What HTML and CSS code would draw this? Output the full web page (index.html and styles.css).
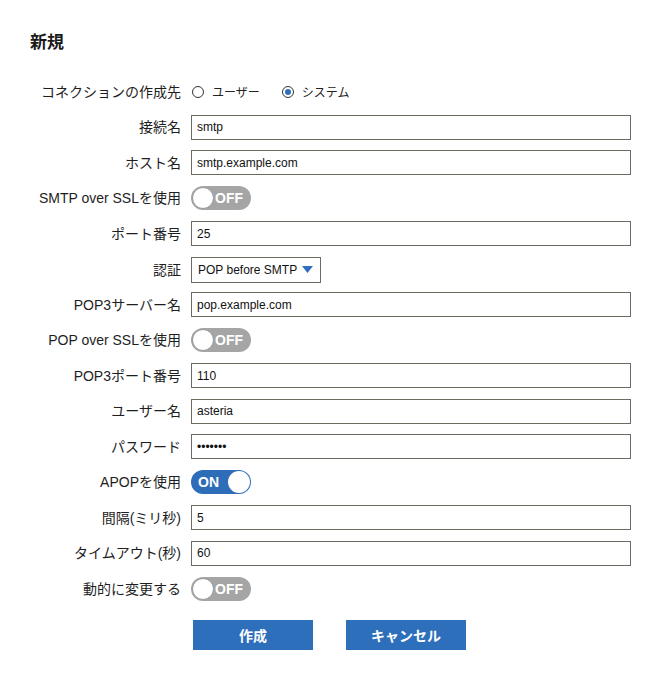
FILE: index.html
```html
<!DOCTYPE html>
<html lang="ja">
<head>
<meta charset="utf-8">
<title>新規</title>
<link rel="stylesheet" href="styles.css">
</head>
<body>
<div class="page">
  <h1 class="title">新規</h1>
  <div class="form">
    <div class="row">
      <span class="label">コネクションの作成先</span>
      <div class="radios">
        <span class="radio"><span class="radio-dot"></span>ユーザー</span>
        <span class="radio"><span class="radio-dot is-checked"></span>システム</span>
      </div>
    </div>
    <div class="row">
      <span class="label">接続名</span>
      <input class="input" type="text" value="smtp">
    </div>
    <div class="row">
      <span class="label">ホスト名</span>
      <input class="input" type="text" value="smtp.example.com">
    </div>
    <div class="row">
      <span class="label">SMTP over SSLを使用</span>
      <div><span class="toggle is-off"><span class="knob"></span><span class="toggle-text">OFF</span></span></div>
    </div>
    <div class="row">
      <span class="label">ポート番号</span>
      <input class="input" type="text" value="25">
    </div>
    <div class="row">
      <span class="label">認証</span>
      <div><span class="select"><span>POP before SMTP</span><svg class="arrow" width="11" height="7" viewBox="0 0 11 7"><polygon points="0,0 11,0 5.5,7" fill="#2f6fbd"/></svg></span></div>
    </div>
    <div class="row">
      <span class="label">POP3サーバー名</span>
      <input class="input" type="text" value="pop.example.com">
    </div>
    <div class="row">
      <span class="label">POP over SSLを使用</span>
      <div><span class="toggle is-off"><span class="knob"></span><span class="toggle-text">OFF</span></span></div>
    </div>
    <div class="row">
      <span class="label">POP3ポート番号</span>
      <input class="input" type="text" value="110">
    </div>
    <div class="row">
      <span class="label">ユーザー名</span>
      <input class="input" type="text" value="asteria">
    </div>
    <div class="row">
      <span class="label">パスワード</span>
      <input class="input" type="password" value="asteria">
    </div>
    <div class="row">
      <span class="label">APOPを使用</span>
      <div><span class="toggle is-on"><span class="toggle-text">ON</span><span class="knob"></span></span></div>
    </div>
    <div class="row">
      <span class="label">間隔(ミリ秒)</span>
      <input class="input" type="text" value="5">
    </div>
    <div class="row">
      <span class="label">タイムアウト(秒)</span>
      <input class="input" type="text" value="60">
    </div>
    <div class="row">
      <span class="label">動的に変更する</span>
      <div><span class="toggle is-off"><span class="knob"></span><span class="toggle-text">OFF</span></span></div>
    </div>
  </div>
  <div class="actions">
    <button class="btn" type="button">作成</button>
    <button class="btn" type="button">キャンセル</button>
  </div>
</div>
</body>
</html>
```
FILE: styles.css
```css
html, body {
  margin: 0;
  padding: 0;
  background: #ffffff;
}
body {
  font-family: "Liberation Sans", "Noto Sans CJK JP", sans-serif;
  color: #222222;
}
.page {
  padding: 31px 28px 0 28px;
}
.title {
  margin: 0 0 24px 2px;
  font-size: 17px;
  line-height: 24px;
  font-weight: bold;
  color: #1a1a1a;
}
.form {
  display: flex;
  flex-direction: column;
  gap: 10.5px;
}
.row {
  display: grid;
  grid-template-columns: 153px 1fr;
  column-gap: 10px;
  align-items: center;
  height: 25px;
}
.label {
  text-align: right;
  font-size: 14px;
  line-height: 20px;
  white-space: nowrap;
  color: #1e1e1e;
}
.input {
  box-sizing: border-box;
  width: 100%;
  height: 25px;
  margin: 0;
  border: 1px solid #6b6b62;
  border-radius: 0;
  padding: 0 5px;
  font-family: "Liberation Sans", "Noto Sans CJK JP", sans-serif;
  font-size: 12px;
  color: #111111;
  background: #ffffff;
  outline: none;
}
.radios {
  display: flex;
  align-items: center;
  gap: 22px;
  font-size: 12px;
  padding-left: 1px;
}
.radio {
  display: inline-flex;
  align-items: center;
  gap: 8px;
}
.radio-dot {
  box-sizing: border-box;
  width: 12px;
  height: 12px;
  border: 1px solid #333333;
  border-radius: 50%;
  display: inline-flex;
  align-items: center;
  justify-content: center;
  background: #ffffff;
}
.radio-dot.is-checked::after {
  content: "";
  width: 6px;
  height: 6px;
  border-radius: 50%;
  background: #2f6fbd;
}
.toggle {
  box-sizing: border-box;
  width: 60px;
  height: 24px;
  border-radius: 12px;
  display: flex;
  align-items: center;
  padding: 0 1px;
  color: #ffffff;
  font-weight: bold;
  font-size: 14px;
}
.toggle.is-off {
  background: #a5a5a5;
}
.toggle.is-on {
  background: #2e6db8;
  justify-content: space-between;
  padding-left: 7px;
}
.knob {
  box-sizing: border-box;
  width: 22px;
  height: 22px;
  border-radius: 50%;
  background: #ffffff;
  flex: none;
}
.toggle.is-off .knob {
  border: 1px solid #9a9a9a;
}
.toggle.is-off .toggle-text {
  margin-left: 1px;
}
.select {
  box-sizing: border-box;
  width: 130px;
  height: 26px;
  border: 1px solid #6b6b62;
  display: flex;
  align-items: center;
  justify-content: space-between;
  padding: 0 7px 0 6px;
  font-size: 12px;
  color: #111111;
}
.arrow {
  display: block;
}
.actions {
  display: flex;
  justify-content: center;
  gap: 33px;
  margin-top: 19px;
}
.btn {
  width: 120px;
  height: 30px;
  border: none;
  border-radius: 0;
  background: #2e6fbb;
  color: #ffffff;
  font-family: "Liberation Sans", "Noto Sans CJK JP", sans-serif;
  font-size: 14px;
  font-weight: bold;
  padding: 0;
}
```
